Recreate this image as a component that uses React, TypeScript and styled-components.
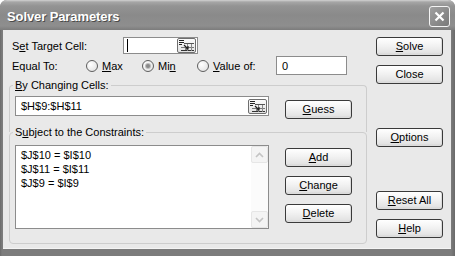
import React from 'react';
import styled, { createGlobalStyle } from 'styled-components';

const Global = createGlobalStyle`
  html, body { margin: 0; padding: 0; background: #ffffff; }
  body { font-family: "Liberation Sans", Arial, sans-serif; font-size: 11px; color: #000; }
  * { box-sizing: border-box; }
`;

const Window = styled.div`
  width: 455px;
  height: 256px;
  display: flex;
  flex-direction: column;
  background: #747474;
  border-radius: 7px 7px 0 0;
  overflow: hidden;
`;

const TitleBar = styled.div`
  height: 30px;
  flex: none;
  display: flex;
  align-items: center;
  justify-content: space-between;
  padding: 0 5px 0 7px;
  background: linear-gradient(#d2d2d2 0px, #a6a6a6 2px, #939393 6px, #8a8a8a 15px, #8e8e8e 26px, #7c7c7c 30px);
`;

const Title = styled.span`
  color: #fff;
  font-weight: bold;
  font-size: 13px;
  letter-spacing: -0.1px;
  text-shadow: 1px 1px 0 #4a4a4a;
  margin-top: 2px;
`;

const CloseBox = styled.div`
  width: 21px;
  height: 21px;
  border: 1px solid #f4f4f4;
  border-radius: 3px;
  background: linear-gradient(135deg, #a0a0a0, #7a7a7a);
  display: flex;
  align-items: center;
  justify-content: center;
  margin-top: 2px;
`;

const Frame = styled.div`
  flex: 1;
  display: flex;
  padding: 0 4px 7px 3px;
  background: linear-gradient(90deg, #6a6a6a, #7c7c7c 2px, #7c7c7c 451px, #6a6a6a);
`;

const Body = styled.div`
  flex: 1;
  display: flex;
  padding: 7px 0 0 6px;
  background: #e9e9e9;
  border-bottom: 1px solid #f4f4f4;
`;

const LeftCol = styled.div`
  width: 358px;
  display: flex;
  flex-direction: column;
`;

const RightCol = styled.div`
  margin-left: 9px;
  width: 67px;
  display: flex;
  flex-direction: column;
`;

const Row = styled.div<{ $mt?: number; $h: number }>`
  display: flex;
  align-items: center;
  height: ${p => p.$h}px;
  margin-top: ${p => p.$mt ?? 0}px;
  padding-left: 3px;
`;

const Label = styled.span<{ $w: number }>`
  width: ${p => p.$w}px;
  flex: none;
  white-space: nowrap;
`;

const TextBox = styled.div<{ $w: number; $h: number }>`
  width: ${p => p.$w}px;
  height: ${p => p.$h}px;
  flex: none;
  border: 1px solid #8c8c8c;
  background: #fff;
  display: flex;
  align-items: center;
  padding: 0 2px 0 5px;
  white-space: nowrap;
`;

const Caret = styled.span`
  width: 1px;
  height: 13px;
  background: #000;
  margin-left: -2px;
`;

const Fill = styled.span`
  flex: 1;
`;

const RefButton = styled.div`
  width: 19px;
  height: 15px;
  flex: none;
  margin-right: -1px;
  border: 1px solid #6e6e6e;
  border-radius: 2px;
  background: linear-gradient(#fbfbfb, #e2e2e2);
  display: flex;
  align-items: center;
  justify-content: center;
`;

const RadioOption = styled.label<{ $w: number }>`
  width: ${p => p.$w}px;
  flex: none;
  display: flex;
  align-items: center;
  gap: 4px;
  white-space: nowrap;
`;

const RadioCircle = styled.span<{ $on?: boolean }>`
  width: 12px;
  height: 12px;
  border-radius: 50%;
  border: 1px solid #5e5e5e;
  background: radial-gradient(circle at 35% 35%, #ffffff, #e4e4e4 80%);
  display: flex;
  align-items: center;
  justify-content: center;
  &::after {
    content: '';
    display: ${p => (p.$on ? 'block' : 'none')};
    width: 4px;
    height: 4px;
    border-radius: 50%;
    background: #8a8a8a;
    box-shadow: 0 0 0 1px #bdbdbd;
  }
`;

const Group = styled.div<{ $h: number; $top?: boolean; $mt?: number; $pt: number }>`
  position: relative;
  height: ${p => p.$h}px;
  margin-top: ${p => p.$mt ?? 0}px;
  border: 1px solid #cdcdcd;
  border-bottom: ${p => (p.$top ? 'none' : '1px solid #cdcdcd')};
  border-radius: ${p => (p.$top ? '4px 4px 0 0' : '4px')};
  padding: ${p => p.$pt}px 0 0 5px;
  display: flex;
  align-items: flex-start;
`;

const Legend = styled.span`
  position: absolute;
  top: -8px;
  left: 3px;
  padding: 0 2px;
  background: #e9e9e9;
  line-height: 14px;
`;

const Button = styled.button<{ $mt?: number }>`
  width: 67px;
  height: 19px;
  flex: none;
  margin-top: ${p => p.$mt ?? 0}px;
  padding: 0;
  font: inherit;
  color: #000;
  border: 1px solid #3a3a3a;
  border-radius: 3px;
  background: linear-gradient(#ffffff, #f2f2f2 45%, #e4e4e4 85%, #d2d2d2);
  box-shadow: inset -1px -1px 0 #dcdcdc;
  display: flex;
  align-items: center;
  justify-content: center;
  line-height: 1;
`;

const ButtonStack = styled.div<{ $mt: number }>`
  margin-left: 16px;
  margin-top: ${p => p.$mt}px;
  display: flex;
  flex-direction: column;
  gap: 9px;
`;

const ListBox = styled.div`
  width: 254px;
  height: 84px;
  border: 1px solid #8c8c8c;
  background: #fff;
  display: flex;
`;

const ListItems = styled.div`
  flex: 1;
  padding: 2px 0 0 5px;
  line-height: 14px;
`;

const ScrollBar = styled.div`
  width: 17px;
  display: flex;
  flex-direction: column;
  justify-content: space-between;
  background: #fbfbfb;
`;

const ScrollArrow = styled.div`
  width: 17px;
  height: 17px;
  border: 1px solid #e6e6e6;
  border-radius: 2px;
  background: #f4f4f4;
  display: flex;
  align-items: center;
  justify-content: center;
`;

const RefIcon = () => (
  <svg width="15" height="11" viewBox="0 0 15 11">
    <rect x="0" y="0" width="5" height="1" fill="#222" />
    <rect x="0" y="2" width="5" height="1" fill="#222" />
    <rect x="0" y="4" width="3" height="1" fill="#222" />
    <rect x="5" y="3" width="10" height="1" fill="#555" />
    <rect x="2" y="7" width="13" height="1" fill="#777" />
    <rect x="2" y="10" width="13" height="1" fill="#333" />
    <rect x="8" y="4" width="1" height="7" fill="#888" />
    <rect x="12" y="4" width="1" height="7" fill="#888" />
    <path d="M5 5 L9 9 M9 6 L9 9 L6 9" stroke="#222" strokeWidth="1.2" fill="none" />
  </svg>
);

const Chevron = ({ up }: { up?: boolean }) => (
  <svg width="9" height="6" viewBox="0 0 9 6">
    <path d={up ? 'M1 5 L4.5 1.5 L8 5' : 'M1 1 L4.5 4.5 L8 1'} stroke="#c4c4c4" strokeWidth="1.6" fill="none" />
  </svg>
);

const RefEdit = ({ w, h, children }: { w: number; h: number; children?: React.ReactNode }) => (
  <TextBox $w={w} $h={h}>
    {children}
    <Fill />
    <RefButton>
      <RefIcon />
    </RefButton>
  </TextBox>
);

export default function App() {
  return (
    <>
      <Global />
      <Window>
        <TitleBar>
          <Title>Solver Parameters</Title>
          <CloseBox>
            <svg width="11" height="11" viewBox="0 0 11 11">
              <path d="M1.5 1.5 L9.5 9.5 M9.5 1.5 L1.5 9.5" stroke="#fff" strokeWidth="2.2" />
            </svg>
          </CloseBox>
        </TitleBar>
        <Frame>
          <Body>
            <LeftCol>
              <Row $h={17}>
                <Label $w={111}>
                  S<u>e</u>t Target Cell:
                </Label>
                <RefEdit w={75} h={17}>
                  <Caret />
                </RefEdit>
              </Row>
              <Row $h={19} $mt={2}>
                <Label $w={74}>Equal To:</Label>
                <RadioOption $w={56}>
                  <RadioCircle />
                  <span>
                    <u>M</u>ax
                  </span>
                </RadioOption>
                <RadioOption $w={55}>
                  <RadioCircle $on />
                  <span>
                    Mi<u>n</u>
                  </span>
                </RadioOption>
                <RadioOption $w={79}>
                  <RadioCircle />
                  <span>
                    <u>V</u>alue of:
                  </span>
                </RadioOption>
                <TextBox $w={71} $h={19}>0</TextBox>
              </Row>
              <Group $h={47} $top $mt={10} $pt={10}>
                <Legend>
                  <u>B</u>y Changing Cells:
                </Legend>
                <RefEdit w={254} h={20}>
                  $H$9:$H$11
                </RefEdit>
                <ButtonStack $mt={4}>
                  <Button>
                    <u>G</u>uess
                  </Button>
                </ButtonStack>
              </Group>
              <Group $h={112} $pt={12}>
                <Legend>
                  S<u>u</u>bject to the Constraints:
                </Legend>
                <ListBox>
                  <ListItems>
                    <div>$J$10 = $I$10</div>
                    <div>$J$11 = $I$11</div>
                    <div>$J$9 = $I$9</div>
                  </ListItems>
                  <ScrollBar>
                    <ScrollArrow>
                      <Chevron up />
                    </ScrollArrow>
                    <ScrollArrow>
                      <Chevron />
                    </ScrollArrow>
                  </ScrollBar>
                </ListBox>
                <ButtonStack $mt={3}>
                  <Button>
                    <u>A</u>dd
                  </Button>
                  <Button>
                    <u>C</u>hange
                  </Button>
                  <Button>
                    <u>D</u>elete
                  </Button>
                </ButtonStack>
              </Group>
            </LeftCol>
            <RightCol>
              <Button>
                <u>S</u>olve
              </Button>
              <Button $mt={9}>Close</Button>
              <Button $mt={44}>
                <u>O</u>ptions
              </Button>
              <Button $mt={44}>
                <u>R</u>eset All
              </Button>
              <Button $mt={9}>
                <u>H</u>elp
              </Button>
            </RightCol>
          </Body>
        </Frame>
      </Window>
    </>
  );
}
